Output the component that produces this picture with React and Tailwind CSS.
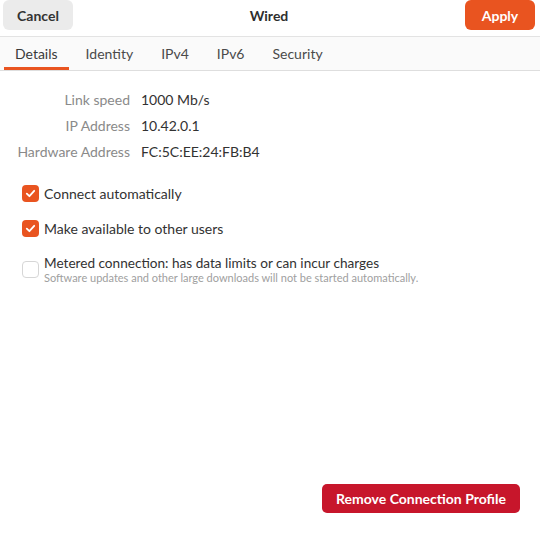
import React from "react";

function Check({ checked }) {
  if (checked) {
    return (
      <div className="w-[17px] h-[17px] rounded-[4px] bg-[#e95420] flex items-center justify-center shrink-0">
        <svg width="11" height="11" viewBox="0 0 11 11" fill="none">
          <path d="M1.8 5.6 L4.4 8.2 L9.2 2.8" stroke="white" strokeWidth="1.8" strokeLinecap="round" strokeLinejoin="round" />
        </svg>
      </div>
    );
  }
  return <div className="w-[17px] h-[17px] rounded-[4px] border border-[#d6d6d6] bg-white shrink-0" />;
}

export default function App() {
  const font = { fontFamily: 'Lato, "Noto Sans", sans-serif' };
  return (
    <div className="w-[540px] h-[533px] bg-white flex flex-col text-[14px] text-[#323232]" style={font}>
      <div className="h-[37px] flex items-center justify-between px-[3px] border-b border-[#e3e3e3] pb-[6px]">
        <button className="w-[70px] h-[30px] rounded-[6px] bg-[#ebebeb] font-bold text-[14px] text-[#333]">Cancel</button>
        <div className="font-bold text-[14px] text-[#2e2e2e]">Wired</div>
        <button className="w-[70px] h-[30px] mr-[2px] rounded-[6px] bg-[#e95420] font-bold text-[14px] text-white">Apply</button>
      </div>
      <div className="h-[34px] bg-[#fafafa] border-b border-[#dedede] flex items-stretch pl-[4px] gap-[6px] pb-[1px]">
        <div className="relative px-[11px] flex items-center text-[#3a3a3a]">
          Details
          <div className="absolute left-0 right-0 bottom-[-1px] h-[3px] bg-[#e95420]" />
        </div>
        <div className="px-[11px] flex items-center text-[#4a4a4a]">Identity</div>
        <div className="px-[11px] flex items-center text-[#4a4a4a]">IPv4</div>
        <div className="px-[11px] flex items-center text-[#4a4a4a]">IPv6</div>
        <div className="px-[11px] flex items-center text-[#4a4a4a]">Security</div>
      </div>
      <div className="flex-1 flex flex-col">
        <div className="grid grid-cols-[130px_1fr] gap-x-[11px] gap-y-[6px] mt-[19px] text-[14px]">
          <div className="text-right text-[#8a8a8a] leading-[20px]">Link speed</div>
          <div className="text-[#323232] leading-[20px]">1000 Mb/s</div>
          <div className="text-right text-[#8a8a8a] leading-[20px]">IP Address</div>
          <div className="text-[#323232] leading-[20px]">10.42.0.1</div>
          <div className="text-right text-[#8a8a8a] leading-[20px]">Hardware Address</div>
          <div className="text-[#323232] leading-[20px]">FC:5C:EE:24:FB:B4</div>
        </div>
        <div className="flex flex-col pl-[22px] mt-[22px]">
          <div className="flex items-center gap-[5px] h-[18px]">
            <Check checked />
            <span className="text-[14px]">Connect automatically</span>
          </div>
          <div className="flex items-center gap-[5px] h-[18px] mt-[17px]">
            <Check checked />
            <span className="text-[14px]">Make available to other users</span>
          </div>
          <div className="flex items-center gap-[5px] mt-[18px]">
            <Check />
            <div className="flex flex-col">
              <span className="text-[13.6px] leading-[16px]">Metered connection: has data limits or can incur charges</span>
              <span className="text-[11px] leading-[13px] text-[#a0a0a0]">Software updates and other large downloads will not be started automatically.</span>
            </div>
          </div>
        </div>
        <div className="flex-1" />
        <div className="flex justify-end pr-[20px] pb-[20px]">
          <button className="w-[198px] h-[29px] rounded-[5px] bg-[#c7162b] text-white font-bold text-[14px]">Remove Connection Profile</button>
        </div>
      </div>
    </div>
  );
}
